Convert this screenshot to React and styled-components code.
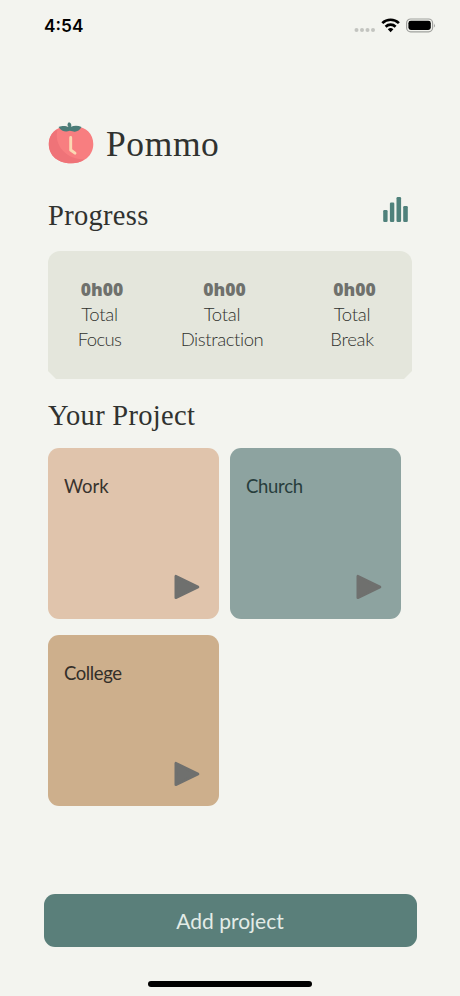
import styled, { createGlobalStyle } from 'styled-components';

const GlobalStyle = createGlobalStyle`
  * {
    box-sizing: border-box;
  }

  body {
    margin: 0;
    background-color: #f3f4ef;
    -webkit-font-smoothing: antialiased;
  }
`;

const SANS = "Lato, 'Open Sans', sans-serif";
const SERIF = "'Liberation Serif', Georgia, serif";

const Screen = styled.div`
  display: flex;
  flex-direction: column;
  width: 460px;
  height: 996px;
  overflow: hidden;
  background-color: #f3f4ef;
  font-family: ${SANS};
  color: #30322f;
`;

const StatusBar = styled.div`
  display: flex;
  justify-content: space-between;
  align-items: center;
  height: 50px;
  padding: 0 24px 0 44px;
`;

const Clock = styled.span`
  font-family: Inter, sans-serif;
  font-size: 17.3px;
  font-weight: 600;
  line-height: 20px;
  color: #000;
  padding-top: 2px;
`;

const Content = styled.main`
  flex: 1;
  display: flex;
  flex-direction: column;
  padding: 0 48px;
`;

const Header = styled.header`
  display: flex;
  align-items: center;
  height: 50px;
  margin-top: 68px;
  gap: 12px;
`;

const Title = styled.h1`
  margin: 2px 0 0;
  font-family: ${SERIF};
  font-size: 35.5px;
  font-weight: 400;
  line-height: 40px;
  letter-spacing: 0.6px;
`;

const SectionHead = styled.div`
  display: flex;
  justify-content: space-between;
  height: 30px;
  margin-top: ${props => props.$top}px;
  padding-right: 3px;
`;

const SectionTitle = styled.h2`
  margin: 0;
  font-family: ${SERIF};
  font-size: 28.5px;
  font-weight: 400;
  line-height: 30px;
  letter-spacing: 0.3px;
`;

const ChartButton = styled.button`
  display: flex;
  align-self: flex-start;
  margin-top: -4px;
  padding: 0;
  border: 0;
  background: none;
`;

// Rounded on top, cut corners at the bottom
const StatsCard = styled.section`
  display: grid;
  grid-template-columns: 103px 142px 118px;
  height: 128px;
  width: 364px;
  margin-top: 20px;
  padding-top: 26px;
  border-radius: 12px 12px 0 0;
  background-color: #e4e6dc;
  clip-path: polygon(0 0, 100% 0, 100% 120px, 356px 100%, 8px 100%, 0 120px);
`;

const Stat = styled.div`
  text-align: center;
  font-size: 18.5px;
  font-weight: 300;
  line-height: 25px;
  color: #30322e;
`;

const StatValue = styled.div`
  padding-left: 5px;
  font-family: 'Open Sans', sans-serif;
  font-size: 17.5px;
  font-weight: 800;
  color: #6f716d;
`;

const StatLabel = styled.div`
  letter-spacing: ${props => props.$spacing}px;
`;

const ProjectGrid = styled.div`
  display: grid;
  grid-template-columns: 171px 171px;
  grid-auto-rows: 171px;
  gap: 16px 11px;
  margin-top: 17px;
`;

const ProjectCard = styled.article`
  display: flex;
  flex-direction: column;
  justify-content: space-between;
  padding: 26px 19px 19px 16px;
  border-radius: 11px;
  background-color: ${props => props.$color};
`;

const ProjectName = styled.span`
  font-size: 18.5px;
  line-height: 24px;
  letter-spacing: ${props => props.$spacing}px;
  color: ${props => props.$ink};
`;

const PlayButton = styled.button`
  align-self: flex-end;
  display: flex;
  padding: 0;
  border: 0;
  background: none;
`;

const Footer = styled.footer`
  display: flex;
  flex-direction: column;
  align-items: center;
  padding: 0 43px 9px;
`;

const AddButton = styled.button`
  width: 373px;
  height: 53px;
  padding: 0 0 1px;
  border: 0;
  border-radius: 11px;
  background-color: #5a7f7a;
  font-family: ${SANS};
  font-size: 21px;
  color: #e3ece7;
`;

const HomeIndicator = styled.div`
  width: 164px;
  height: 6px;
  margin-top: 34px;
  border-radius: 3px;
  background-color: #000;
`;

const StatusIcons = () => (
  <svg width="84" height="20" viewBox="0 0 84 20">
    <g fill="#c3c4c0">
      <circle cx="4.5" cy="15" r="2" />
      <circle cx="10" cy="15" r="2" />
      <circle cx="15.5" cy="15" r="2" />
      <circle cx="21" cy="15" r="2" />
    </g>
    <g fill="none" stroke="#000" strokeWidth="2.7">
      <path d="M30.3 8.1 A12 12 0 0 1 46.9 8.1" />
      <path d="M33.6 11.7 A7.2 7.2 0 0 1 43.6 11.7" />
    </g>
    <path d="M38.6 17.2 L35.8 14.3 A4 4 0 0 1 41.4 14.3 Z" fill="#000" />
    <rect x="54.6" y="4" width="26" height="12.8" rx="4" fill="none" stroke="#a0a19e" strokeWidth="1.2" />
    <rect x="56.4" y="5.8" width="22.4" height="9.2" rx="2.4" fill="#000" />
    <path d="M82 8.4 Q83.8 10.4 82 12.4 Z" fill="#a0a19e" />
  </svg>
);

const TomatoLogo = () => (
  <svg width="46" height="42" viewBox="0 0 46 42">
    <path d="M23 5.5 C35 2.5 45.3 10 45.3 22 C45.3 34 35.5 41.3 23 41.3 C10.5 41.3 0.8 34 0.8 22 C0.8 10 11 2.5 23 5.5 Z" fill="#f87e80" />
    <path d="M9.5 7.5 C3.5 10.5 0.8 16 0.8 22 C0.8 34 10.5 41.3 23 41.3 C28 41.3 32.5 40.2 36.5 37.5 C18 37.5 5.5 23 9.5 7.5 Z" fill="#ef7378" />
    <path d="M10.5 5 C15 3.2 18 4 20.5 5 C18.7 2.7 19.8 1 21 0.2 C23.4 1 23.8 3 23 4.8 C26 3.5 30 3.4 33.5 5 C31.5 8.5 28.5 10.3 25.5 9.5 L21.8 8.8 C17.5 10.6 13.5 9.2 10.5 5 Z" fill="#4b7c78" />
    <path d="M22.7 15.5 V28 L27 31.2" fill="none" stroke="#fbd9b3" strokeWidth="2.9" strokeLinecap="round" strokeLinejoin="round" />
  </svg>
);

const ChartIcon = () => (
  <svg width="26" height="26" viewBox="0 0 26 26" fill="#4f817b">
    <rect x="0.2" y="13" width="4.4" height="12" rx="1.2" />
    <rect x="6.9" y="5.6" width="4.4" height="19.4" rx="1.2" />
    <rect x="13.5" y="0" width="4.6" height="25" rx="1.2" />
    <rect x="20.2" y="9" width="4.6" height="16" rx="1.2" />
  </svg>
);

const PlayIcon = () => (
  <svg width="26" height="26" viewBox="0 0 26 26">
    <path d="M1.8 2.2 V23.8 L24 13 Z" fill="#6f706e" stroke="#6f706e" strokeWidth="2.6" strokeLinejoin="round" />
  </svg>
);

const stats = [
  { value: '0h00', label: 'Focus', spacing: -0.6 },
  { value: '0h00', label: 'Distraction', spacing: -0.4 },
  { value: '0h00', label: 'Break', spacing: -0.3 },
];

const projects = [
  { name: 'Work', color: '#e0c4ac', ink: '#39332e', spacing: 0 },
  { name: 'Church', color: '#8da3a0', ink: '#273d3c', spacing: -0.3 },
  { name: 'College', color: '#cdaf8c', ink: '#332e29', spacing: -0.4 },
];

const App = () => {
  return (
    <>
      <GlobalStyle />
      <Screen>
        <StatusBar>
          <Clock>4:54</Clock>
          <StatusIcons />
        </StatusBar>

        <Content>
          <Header>
            <TomatoLogo />
            <Title>Pommo</Title>
          </Header>

          {/* Progress */}
          <SectionHead $top={33}>
            <SectionTitle>Progress</SectionTitle>
            <ChartButton aria-label="Statistics">
              <ChartIcon />
            </ChartButton>
          </SectionHead>
          <StatsCard>
            {stats.map(stat => (
              <Stat key={stat.label}>
                <StatValue>{stat.value}</StatValue>
                <StatLabel $spacing={-0.3}>Total</StatLabel>
                <StatLabel $spacing={stat.spacing}>{stat.label}</StatLabel>
              </Stat>
            ))}
          </StatsCard>

          {/* Projects */}
          <SectionHead $top={22}>
            <SectionTitle>Your Project</SectionTitle>
          </SectionHead>
          <ProjectGrid>
            {projects.map(project => (
              <ProjectCard key={project.name} $color={project.color}>
                <ProjectName $ink={project.ink} $spacing={project.spacing}>{project.name}</ProjectName>
                <PlayButton aria-label={`Start ${project.name}`}>
                  <PlayIcon />
                </PlayButton>
              </ProjectCard>
            ))}
          </ProjectGrid>
        </Content>

        <Footer>
          <AddButton>Add project</AddButton>
          <HomeIndicator />
        </Footer>
      </Screen>
    </>
  );
};

export default App;
